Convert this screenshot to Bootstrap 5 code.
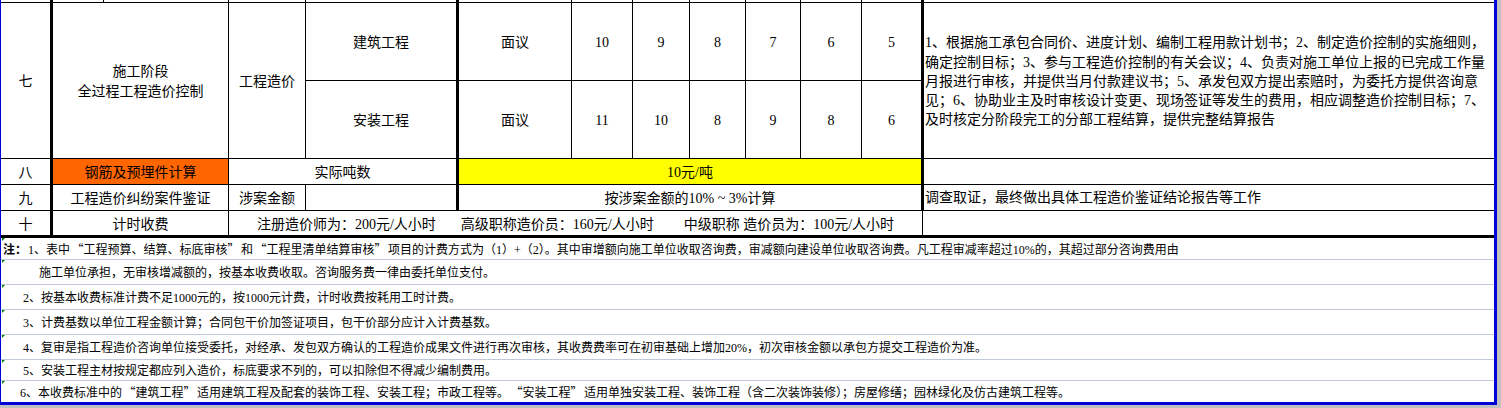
<!DOCTYPE html>
<html lang="zh-CN">
<head>
<meta charset="utf-8">
<title>工程造价收费标准</title>
<link rel="stylesheet" href="https://cdn.jsdelivr.net/npm/bootstrap@5.3.0/dist/css/bootstrap.min.css">
<style>
html,body{margin:0;height:408px;overflow:hidden;background:#c0c0c0;}
body{font-family:"Liberation Serif","Noto Sans CJK SC",serif;color:#000;font-size:14px;}
.qo,.qc{font-family:"Noto Sans CJK SC",sans-serif;display:inline-block;width:1.125em;}
.qo{text-align:right;}
.qc{text-align:left;}
.sheetframe{width:1497px;height:405px;background:#fff;border-left:1px solid #0000d8;border-right:3px solid #0000d8;border-bottom:3px solid #0000d8;overflow:hidden;}
.sheet.table{width:1493px;table-layout:fixed;border-collapse:separate;border-spacing:0;--bs-table-bg:transparent;font-size:14px;line-height:20px;color:#000;margin:0;}
.sheet.table>tbody>tr>td{padding:2px 0 0;border:0 solid #000;border-right-width:1px;border-bottom-width:1px;text-align:center;vertical-align:middle;white-space:nowrap;overflow:hidden;color:#000;}
.sheet.table>tbody>tr.stub-row>td{padding:0;}
.sheet.table>tbody>tr.end-row>td{padding-top:4px;}
.sheet.table>tbody>tr>td.thick-r{border-right-width:3px;}
.sheet.table>tbody>tr>td.no-r{border-right-width:0;}
.sheet.table>tbody>tr>td.thick-b{border-bottom-width:3px;}
.sheet.table>tbody>tr>td.cell-orange{background:#ff6600;}
.sheet.table>tbody>tr>td.cell-yellow{background:#ffff00;}
.sheet.table>tbody>tr>td.cell-left{text-align:left;padding:1px 0 0 1px;}
.sheet.table>tbody>tr>td.cell-scope{text-align:left;padding:2px 0 0 1px;line-height:19.25px;}
.stub-row{height:3px;}
.stub-row td{font-size:0;line-height:0;}
.tall-row{height:78px;}
.mid-row{height:26px;}
.end-row{height:27px;}
.rate-gap-a{margin-left:25px;}
.rate-gap-b{margin-left:30px;}
.noterow{position:relative;border-bottom:1px solid #c0c8dc;font-size:12px;line-height:16px;white-space:nowrap;padding-top:2px;}
.noterow:last-child{border-bottom:0;}
.noterow::before{content:"";position:absolute;left:1px;top:0;width:0;height:0;border-top:3px solid #008000;border-right:3px solid transparent;}
.h-a{height:22px;padding-top:1px;}
.h-b{height:25px;}
.h-c{height:21px;padding-top:1px;}
.in-0{padding-left:2px;}
.in-1{padding-left:38px;}
.in-2{padding-left:22px;}
.in-3{padding-left:19px;}
.note-tag{font-weight:700;font-family:"Noto Sans CJK SC",sans-serif;margin-right:1px;}
</style>
</head>
<body>
<div class="sheetframe">
<table class="table sheet">
<colgroup>
<col style="width:52px"><col style="width:51px"><col style="width:125px"><col style="width:77px"><col style="width:153px"><col style="width:113px"><col style="width:61px"><col style="width:57px"><col style="width:56px"><col style="width:55px"><col style="width:61px"><col style="width:61px"><col style="width:1px"><col style="width:570px">
</colgroup>
<tbody>
<tr class="stub-row"><td class="thick-r"></td><td></td><td></td><td></td><td class="thick-r"></td><td></td><td></td><td></td><td></td><td></td><td></td><td colspan="2" class="thick-r"></td><td class="no-r"></td></tr>
<tr class="tall-row">
<td rowspan="2" class="thick-r">七</td>
<td rowspan="2" colspan="2">施工阶段<br>全过程工程造价控制</td>
<td rowspan="2">工程造价</td>
<td class="thick-r">建筑工程</td>
<td>面议</td><td>10</td><td>9</td><td>8</td><td>7</td><td>6</td><td colspan="2" class="thick-r">5</td>
<td rowspan="2" class="no-r cell-scope">1、根据施工承包合同价、进度计划、编制工程用款计划书；2、制定造价控制的实施细则，<br>确定控制目标；3、参与工程造价控制的有关会议；4、负责对施工单位上报的已完成工作量<br>月报进行审核，并提供当月付款建议书；5、承发包双方提出索赔时，为委托方提供咨询意<br>见；6、协助业主及时审核设计变更、现场签证等发生的费用，相应调整造价控制目标；7、<br>及时核定分阶段完工的分部工程结算，提供完整结算报告</td>
</tr>
<tr class="tall-row">
<td class="thick-r">安装工程</td>
<td>面议</td><td>11</td><td>10</td><td>8</td><td>9</td><td>8</td><td colspan="2" class="thick-r">6</td>
</tr>
<tr class="mid-row">
<td class="thick-r">八</td>
<td colspan="2" class="cell-orange">钢筋及预埋件计算</td>
<td colspan="2" class="thick-r">实际吨数</td>
<td colspan="8" class="cell-yellow thick-r">10元/吨</td>
<td class="no-r"></td>
</tr>
<tr class="mid-row">
<td class="thick-r">九</td>
<td colspan="2">工程造价纠纷案件鉴证</td>
<td>涉案金额</td>
<td class="thick-r"></td>
<td colspan="8" class="thick-r">按涉案金额的10% ~ 3%计算</td>
<td class="no-r cell-left">调查取证，最终做出具体工程造价鉴证结论报告等工作</td>
</tr>
<tr class="end-row">
<td class="thick-r thick-b">十</td>
<td colspan="2" class="thick-b">计时收费</td>
<td colspan="9" class="thick-b">注册造价师为：200元/人小时<span class="rate-gap-a">高级职称造价员：160元/人小时</span><span class="rate-gap-b">中级职称 造价员为：100元/人小时</span></td>
<td colspan="2" class="thick-b no-r"></td>
</tr>
</tbody>
</table>
<div class="d-flex flex-column">
<div class="noterow h-a d-flex align-items-center in-0"><span class="note-tag">注：</span><span>1、表中<span class="qo">“</span>工程预算、结算、标底审核<span class="qc">”</span>和<span class="qo">“</span>工程里清单结算审核<span class="qc">”</span>项目的计费方式为（1）+（2）。其中审增额向施工单位收取咨询费，审减额向建设单位收取咨询费。凡工程审减率超过10%的，其超过部分咨询费用由</span></div>
<div class="noterow h-b d-flex align-items-center in-1">施工单位承担，无审核增减额的，按基本收费收取。咨询服务费一律由委托单位支付。</div>
<div class="noterow h-b d-flex align-items-center in-2">2、按基本收费标准计费不足1000元的，按1000元计费，计时收费按耗用工时计费。</div>
<div class="noterow h-b d-flex align-items-center in-2">3、计费基数以单位工程金额计算；合同包干价加签证项目，包干价部分应计入计费基数。</div>
<div class="noterow h-b d-flex align-items-center in-2">4、复审是指工程造价咨询单位接受委托，对经承、发包双方确认的工程造价成果文件进行再次审核，其收费费率可在初审基础上增加20%，初次审核金额以承包方提交工程造价为准。</div>
<div class="noterow h-c d-flex align-items-center in-2">5、安装工程主材按规定都应列入造价，标底要求不列的，可以扣除但不得减少编制费用。</div>
<div class="noterow h-c d-flex align-items-center in-3"><span>6、本收费标准中的<span class="qo">“</span>建筑工程<span class="qc">”</span>适用建筑工程及配套的装饰工程、安装工程；市政工程等。<span class="qo">“</span>安装工程<span class="qc">”</span>适用单独安装工程、装饰工程（含二次装饰装修）；房屋修缮；园林绿化及仿古建筑工程等。</span></div>
</div>
</div>
<script src="https://cdn.jsdelivr.net/npm/bootstrap@5.3.0/dist/js/bootstrap.bundle.min.js"></script>
</body>
</html>
